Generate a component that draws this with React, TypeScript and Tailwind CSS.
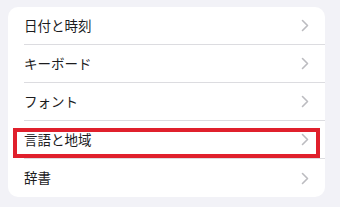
import React from 'react';

const items = ['日付と時刻', 'キーボード', 'フォント', '言語と地域', '辞書'];

const Chevron: React.FC = () => (
  <svg width="8" height="13" viewBox="0 0 8 13" fill="none" className="shrink-0">
    <path d="M1.5 1.5 L6.5 6.5 L1.5 11.5" stroke="#bcbcc0" strokeWidth="1.6" strokeLinecap="round" strokeLinejoin="round" />
  </svg>
);

const App: React.FC = () => {
  return (
    <div
      className="w-[340px] h-[207px] bg-[#f2f2f7] pt-[7px] px-[8px] pr-[15px]"
      style={{ fontFamily: '"Noto Sans CJK JP", "Noto Sans", sans-serif' }}
    >
      <div className="bg-white rounded-[10px] flex flex-col">
        {items.map((label, idx) => {
          const last = idx + 1 === items.length;
          return (
            <div key={idx} className="relative pl-4 h-[38px] flex">
              <div
                className={
                  'flex-1 flex items-center justify-between pr-[16px] ' +
                  (last ? '' : 'border-b border-[#dcdce0]')
                }
              >
                <span className="text-[13.5px] text-[#1c1c1e] leading-none">{label}</span>
                <Chevron />
              </div>
              {label === '言語と地域' ? (
                <div className="absolute left-[5px] right-[5px] top-[7px] h-[30px] border-4 border-[#e0202c]" />
              ) : null}
            </div>
          );
        })}
      </div>
    </div>
  );
};

export default App;
